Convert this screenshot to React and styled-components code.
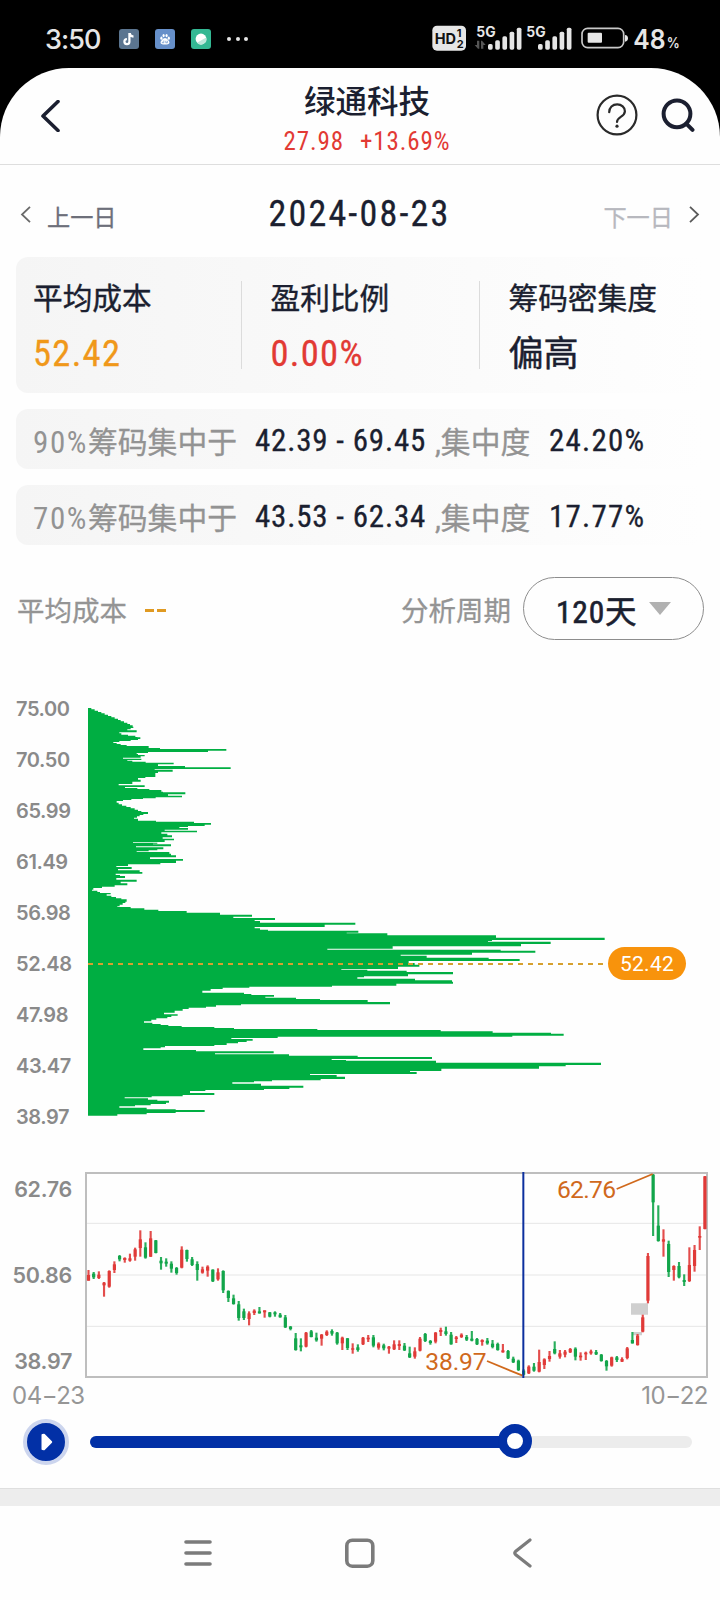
import React, { useState } from "react";
import styled, { createGlobalStyle } from "styled-components";

const GlobalStyle = createGlobalStyle`
  * {
    box-sizing: border-box;
  }
  body {
    margin: 0;
    background: #000;
    font-family: Roboto, "Noto Sans CJK SC", sans-serif;
    color: #1b1f30;
  }
  svg {
    display: block;
    flex: none;
  }
`;

const Screen = styled.div`
  width: 720px;
  height: 1600px;
  display: flex;
  flex-direction: column;
  overflow: hidden;
  background: #000;
`;

/* status bar */
const StatusBar = styled.div`
  height: 68px;
  flex: none;
  display: flex;
  align-items: center;
  justify-content: space-between;
  padding: 10px 10px 0 45px;
  color: #e6e6e6;
`;
const StatusLeft = styled.div`
  display: flex;
  align-items: center;
  gap: 16px;
`;
const Time = styled.span`
  width: 58px;
  margin-top: 2px;
  font-family: Inter, sans-serif;
  font-size: 27px;
  font-weight: 500;
  line-height: 30px;
  letter-spacing: -0.9px;
  white-space: nowrap;
`;
const AppBadge = styled.div`
  width: 20px;
  height: 20px;
  border-radius: 3px;
  background: ${(props) => props.color};
`;
const Dots = styled.div`
  display: flex;
  gap: 4.5px;
`;
const Dot = styled.i`
  width: 4px;
  height: 4px;
  border-radius: 50%;
  background: #e6e6e6;
`;

/* app sheet */
const Sheet = styled.div`
  flex: 1;
  display: flex;
  flex-direction: column;
  background: #fefefe;
  border-radius: 69px 69px 0 0;
`;
const Header = styled.header`
  height: 97px;
  flex: none;
  display: grid;
  grid-template-columns: 160px 1fr 146px;
  border-bottom: 1px solid #dedede;
`;
const HeaderLeft = styled.div`
  padding: 32px 0 0 40px;
`;
const HeaderRight = styled.div`
  display: flex;
  padding-top: 26px;
  margin-left: 22px;
  gap: 23px;
`;
const Titles = styled.div`
  display: flex;
  flex-direction: column;
  align-items: center;
  padding-top: 17px;
`;
const Title = styled.h1`
  margin: 0;
  font-size: 31.5px;
  font-weight: 500;
  line-height: 36px;
`;
const Quote = styled.div`
  display: flex;
  gap: 16px;
  margin-top: 7px;
  font-size: 25px;
  font-stretch: 75%;
  line-height: 28px;
  letter-spacing: 0.9px;
  color: #e23a34;
`;

const DateBar = styled.div`
  height: 92px;
  flex: none;
  display: grid;
  grid-template-columns: 160px 1fr 161px;
  align-items: center;
  padding: 6px 20px 0;
`;
const DayLink = styled.div`
  display: flex;
  align-items: center;
  justify-content: ${(props) => (props.$end ? "flex-end" : "flex-start")};
  gap: 16px;
  font-size: 23.2px;
  line-height: 28px;
  -webkit-text-stroke: 0.3px;
  color: ${(props) => (props.$end ? "#b7b8be" : "#6d6f7a")};
  span {
    margin-top: 7px;
  }
`;
const CurrentDate = styled.div`
  text-align: center;
  font-size: 36px;
  font-stretch: 75%;
  line-height: 40px;
  white-space: nowrap;
  letter-spacing: 2.2px;
  -webkit-text-stroke: 0.3px;
`;

const panel = "linear-gradient(90deg, #f5f5f5 0%, #fefefe 100%)";

const Summary = styled.div`
  height: 136px;
  flex: none;
  margin: 0 16px;
  padding: 24px 0 23px;
  display: grid;
  grid-template-columns: 225px 238px 1fr;
  border-radius: 12px;
  background: ${panel};
`;
const Stat = styled.div`
  height: 88px;
  padding-left: ${(props) => (props.$first ? 17 : 28.5)}px;
  border-left: ${(props) => (props.$first ? "none" : "1px solid #dcdcdc")};
  display: flex;
  flex-direction: column;
`;
const StatLabel = styled.span`
  font-size: 29.7px;
  line-height: 36px;
  white-space: nowrap;
  -webkit-text-stroke: 0.4px;
`;
const StatValue = styled.span`
  margin-top: ${(props) => (props.$text ? 20 : 19)}px;
  font-size: ${(props) => (props.$text ? 35 : 36.5)}px;
  font-weight: 400;
  font-stretch: 75%;
  line-height: 36px;
  letter-spacing: ${(props) => (props.$text ? 0 : 1.3)}px;
  -webkit-text-stroke: ${(props) => (props.$text ? 0.5 : 0.3)}px;
  color: ${(props) => props.color || "inherit"};
`;

const Range = styled.div`
  height: 60px;
  flex: none;
  margin: 16px 16px 0;
  padding: 2px 0 0 17px;
  display: flex;
  align-items: center;
  border-radius: 12px;
  background: ${panel};
  font-size: 29.8px;
  font-stretch: 75%;
  white-space: nowrap;
  -webkit-text-stroke: 0.3px;
  color: #939393;
`;
const RangeLabel = styled.span`
  width: ${(props) => props.width}px;
`;
// digits of the percentage are spaced wider than the characters after it
const Percent = styled.span`
  font-size: 31px;
  letter-spacing: 1.6px;
  -webkit-text-stroke: 0;
`;
const Strong = styled.b`
  width: ${(props) => props.width}px;
  padding-top: 1px;
  font-size: 31px;
  font-weight: 400;
  letter-spacing: ${(props) => props.$spacing}px;
  color: #1b1f30;
`;

const Controls = styled.div`
  height: 63px;
  flex: none;
  margin: 32px 16px 0 17px;
  display: flex;
  align-items: center;
  font-size: 27.5px;
  -webkit-text-stroke: 0.3px;
  color: #949494;
`;
const AvgDash = styled.span`
  display: flex;
  gap: 3px;
  margin: 4px auto 0 18px;
  i {
    width: 9px;
    height: 3px;
    background: #e09a22;
  }
`;
const PeriodSelect = styled.button`
  width: 181px;
  height: 63px;
  margin-left: 12px;
  padding: 0 0 0 32px;
  display: flex;
  align-items: center;
  gap: 12px;
  border: 1px solid #8d8d8d;
  border-radius: 32px;
  background: none;
  font-family: Roboto, "Noto Sans CJK SC", sans-serif;
  font-size: 31.5px;
  font-stretch: 75%;
  letter-spacing: 0.8px;
  -webkit-text-stroke: 0.6px;
  color: #1b1f30;
`;
const Caret = styled.i`
  margin-top: -1px;
  border: 11px solid transparent;
  border-top: 13px solid #b1b1b1;
  border-bottom: 0;
`;

/* chip distribution */
const ChipPanel = styled.section`
  height: 434px;
  flex: none;
  margin-top: 57px;
  display: flex;
`;
const PriceScale = styled.div`
  width: 88px;
  padding-left: 16px;
  display: flex;
  flex-direction: column;
`;
const PriceTick = styled.span`
  height: 51px;
  flex: none;
  font: 600 20px/24px Inter, sans-serif;
  letter-spacing: -0.4px;
  color: #8a8a8a;
`;
const ChipPlot = styled.div`
  position: relative;
  flex: 1;
  padding-top: 11.3px;
`;
const CostMark = styled.div`
  position: absolute;
  left: 0;
  top: 250px;
  display: flex;
  align-items: center;
`;
const CostLine = styled.div`
  width: 520px;
  height: 2px;
  background: repeating-linear-gradient(90deg, #d6a02e 0 5px, transparent 5px 10px);
`;
const CostPill = styled.div`
  width: 78px;
  height: 33px;
  border-radius: 17px;
  background: #f8930c;
  color: #fff;
  font-size: 21px;
  line-height: 34px;
  letter-spacing: 0.3px;
  text-align: center;
`;

/* candles */
const CandlePanel = styled.section`
  height: 207px;
  flex: none;
  margin-top: 41px;
  display: flex;
`;
const CandleScale = styled.div`
  width: 85px;
  padding: 4px 13px 5px 0;
  display: flex;
  flex-direction: column;
  justify-content: space-between;
  align-items: flex-end;
  font: 600 21.5px/26px Inter, sans-serif;
  letter-spacing: -0.3px;
  color: #8a8a8a;
`;
const Dates = styled.div`
  height: 32px;
  flex: none;
  padding: 2px 12px 0 12px;
  display: flex;
  justify-content: space-between;
  font: 400 24px/30px Inter, sans-serif;
  letter-spacing: -0.5px;
  color: #969696;
`;

const Player = styled.div`
  height: 77px;
  flex: none;
  padding: 8px 28px 0 23px;
  display: flex;
  align-items: flex-start;
  gap: 21px;
`;
const PlayButton = styled.button`
  width: 46px;
  height: 46px;
  padding: 0 0 0 1px;
  display: flex;
  align-items: center;
  justify-content: center;
  border: 4px solid #ccd5ee;
  border-radius: 50%;
  background: #0230a6;
`;
const Track = styled.div`
  position: relative;
  flex: 1;
  height: 12px;
  margin-top: 17px;
  border-radius: 6px;
  background: #ececec;
`;
const Fill = styled.div`
  height: 12px;
  border-radius: 6px;
  background: #0230a6;
`;
const Thumb = styled.div`
  position: absolute;
  top: -12.5px;
  width: 34px;
  height: 34px;
  margin-left: -17px;
  border: 9px solid #0230a6;
  border-radius: 50%;
  background: #fff;
`;

const Divider = styled.div`
  height: 18px;
  flex: none;
  border-top: 1px solid #dfdfdf;
  background: #ededed;
`;
const NavBar = styled.nav`
  flex: 1;
  display: grid;
  grid-template-columns: 162px 166px 1fr;
  align-items: center;
  padding-left: 182px;
`;

// outline of the chip distribution: [start, length], in thirds of a pixel
const chips = [
  [0, 10], [4, 20], [8, 30], [12, 40], [16, 50], [20, 60], [24, 70], [28, 80], [32, 90], [36, 98],
  [40, 108], [44, 118], [48, 126], [52, 134], [56, 136], [60, 128], [64, 118], [67, 146], [73, 94], [76, 100],
  [80, 120], [83, 142], [87, 148], [88, 157], [93, 150], [96, 128], [99, 94], [102, 76], [105, 86], [108, 98],
  [111, 116], [114, 182], [120, 216], [123, 415], [128, 360], [132, 180], [135, 146], [138, 150], [141, 170], [145, 158],
  [149, 105], [152, 160], [156, 118], [158, 133], [161, 173], [164, 257], [169, 210], [174, 291], [178, 428], [183, 200],
  [185, 254], [191, 210], [195, 202], [207, 172], [210, 150], [215, 158], [221, 133], [228, 92], [232, 170], [237, 111],
  [240, 148], [243, 184], [246, 220], [251, 225], [253, 292], [259, 240], [263, 282], [268, 203], [271, 165], [273, 130],
  [276, 105], [279, 86], [284, 92], [289, 102], [293, 115], [297, 128], [301, 140], [305, 150], [309, 160], [312, 180],
  [318, 166], [321, 155], [325, 147], [329, 138], [332, 150], [338, 204], [341, 318], [345, 369], [350, 350], [354, 300],
  [357, 274], [360, 300], [365, 230], [368, 327], [373, 220], [377, 238], [382, 252], [388, 224], [392, 258], [397, 230],
  [402, 135], [404, 208], [407, 195], [409, 249], [415, 144], [418, 226], [424, 208], [427, 182], [430, 146], [432, 244],
  [437, 249], [442, 264], [448, 186], [453, 285], [458, 264], [465, 217], [469, 120], [474, 85], [477, 131], [483, 90],
  [487, 155], [492, 163], [497, 83], [501, 96], [504, 111], [510, 85], [515, 146], [521, 98], [526, 118], [532, 80],
  [536, 42], [540, 16], [545, 12], [548, 28], [552, 36], [555, 68], [559, 56], [563, 70], [567, 84], [571, 100],
  [574, 116], [581, 112], [585, 104], [590, 95], [595, 88], [597, 128], [601, 169], [605, 211], [609, 296], [614, 396],
  [620, 492], [626, 436], [630, 561], [636, 500], [639, 516], [644, 802], [650, 710], [657, 500], [661, 516], [665, 540],
  [668, 811], [674, 776], [676, 898], [682, 1224], [689, 1550], [696, 1212], [699, 1200], [701, 1388], [708, 1299], [715, 914],
  [722, 718], [725, 1238], [728, 1342], [734, 1152], [740, 938], [743, 1016], [749, 1202], [753, 1295], [759, 962], [765, 980],
  [770, 994], [776, 930], [783, 760], [785, 838], [788, 956], [792, 1095], [799, 960], [805, 828], [808, 808], [812, 981],
  [817, 1092], [821, 1095], [827, 925], [833, 732], [836, 484], [839, 404], [843, 368], [848, 343], [854, 468], [858, 490],
  [861, 558], [866, 532], [869, 624], [873, 696], [876, 839], [882, 906], [889, 459], [892, 384], [896, 354], [899, 302],
  [903, 284], [908, 260], [914, 228], [919, 269], [923, 250], [927, 238], [931, 205], [935, 190], [940, 168], [944, 193],
  [948, 218], [951, 241], [954, 281], [957, 379], [960, 438], [963, 688], [966, 1058], [970, 1214], [974, 1389], [977, 1427],
  [983, 1273], [986, 569], [990, 430], [993, 494], [998, 476], [1002, 450], [1006, 416], [1011, 379], [1014, 231], [1018, 218],
  [1021, 166], [1026, 324], [1030, 557], [1036, 381], [1039, 603], [1043, 809], [1047, 1032], [1053, 731], [1056, 774], [1058, 1044],
  [1064, 1539], [1071, 1433], [1075, 1353], [1082, 1060], [1089, 966], [1092, 986], [1098, 666], [1101, 746], [1106, 771], [1113, 698],
  [1117, 552], [1120, 498], [1123, 433], [1127, 519], [1133, 646], [1139, 604], [1143, 528], [1146, 352], [1149, 306], [1155, 379],
  [1161, 284], [1165, 191], [1168, 110], [1171, 180], [1175, 208], [1178, 243], [1184, 234], [1188, 188], [1192, 141], [1195, 94],
  [1199, 176], [1204, 263], [1206, 350], [1212, 263], [1215, 176], [1219, 88], [1223, 0],
];

// high, body top, body bottom, low, in thirds of a pixel; r = up day, g = down day
const candles = `
r330,345,362,362 g336,341,352,357 r334,344,354,357 r366,368,376,410 r331,333,380,383 r304,313,330,339
g285,288,298,304 r292,294,300,308 r281,295,302,305 r263,268,290,302 r211,238,264,290 g247,262,293,296
r213,235,290,291 g240,241,279,280 g291,302,310,329 g295,305,311,320 g304,311,326,338 g321,324,339,344
r259,269,323,325 g269,270,297,305 g291,298,315,318 g304,312,330,362 r320,328,338,341 r316,320,332,350
g328,329,364,366 r325,337,358,362 g331,333,391,399 g391,393,414,426 g404,415,432,434 g423,433,474,482
g446,454,474,480 r454,460,477,496 r448,452,459,465 g441,454,460,461 r451,451,457,473 g456,457,470,472
g454,457,463,470 g459,464,472,473 g465,472,502,504 g498,500,507,511 g519,535,570,572 g535,556,562,574
r516,518,560,562 g510,514,531,532 g518,533,541,545 r522,524,536,557 r511,515,525,528 g508,513,521,527
g516,518,550,554 r530,533,550,570 g534,535,564,570 r550,565,569,581 g553,562,570,575 r531,533,553,555
r525,533,538,546 g525,532,557,562 r547,551,563,569 g551,556,565,571 r558,560,566,581 r541,553,568,570
r541,552,558,570 g549,557,571,573 g560,580,592,594 r562,574,590,596 r531,536,572,574 g519,522,543,546
g540,543,549,554 r516,518,545,550 r503,510,516,528 g500,514,522,527 g516,524,553,554 r528,532,537,549
r520,524,531,534 g525,531,539,543 g513,536,542,544 g534,537,553,555 r538,540,546,557 g534,542,550,554
g540,551,561,565 g548,552,570,572 r552,571,577,578 g570,573,595,597 g590,596,607,609 g599,602,630,633
g628,632,644,646 r616,620,640,642 g609,620,632,635 r569,606,635,637 r595,598,615,627 r573,588,597,605
g544,567,580,583 r570,580,590,596 r570,575,584,592 r564,567,577,579 g562,566,590,601 r577,587,592,602
r575,578,583,600 r569,574,580,584 g570,576,583,585 g582,584,603,605 g600,603,619,632 r590,592,617,620
g588,592,600,606 r592,597,605,606 r561,565,594,598 g516,540,550,551 r522,527,555,557 r464,472,515,517
r279,288,422,430 g42,44,127,228 g136,197,243,245 r208,238,245,290 g242,252,336,351 r316,318,330,362
g306,318,352,355 g343,360,366,378 r262,315,363,366 r255,270,318,335 r199,228,233,270 r48,49,207,208`
  .trim()
  .split(/\s+/)
  .map((c) => ({ up: c[0] === "r", v: c.slice(1).split(",").map(Number) }));

const prices = ["75.00", "70.50", "65.99", "61.49", "56.98", "52.48", "47.98", "43.47", "38.97"];

const ranges = [
  { percent: "90%", range: "42.39 - 69.45", rate: "24.20%" },
  { percent: "70%", range: "43.53 - 62.34", rate: "17.77%" },
];

function ChipShape() {
  const d = chips.map(([y, len]) => `V${y}H${len}`).join("");
  return (
    <svg width="520" height="408" viewBox="0 0 1560 1224">
      <path d={`M0 0${d}V1223H0Z`} fill="#00ae42" />
    </svg>
  );
}

function SignalBars({ x }) {
  return [103, 92, 80, 66, 54].map((top, i) => (
    <rect key={top} x={x + i * 21.6} y={top} width="14" height={120 - top} rx="5" />
  ));
}

function SystemIcons() {
  return (
    <svg width="285" height="58" viewBox="0 1 855 174" fill="#e6e6e6" fontFamily="Inter, sans-serif">
      <rect x="22" y="48" width="101" height="75" rx="14" />
      <g fill="#111" fontWeight="700">
        <text x="29" y="102" fontSize="45" textLength="64" lengthAdjust="spacingAndGlyphs">HD</text>
        <text x="95" y="81" fontSize="33">1</text>
        <text x="95" y="115" fontSize="33">2</text>
      </g>
      <g fontSize="42" fontWeight="700">
        <text x="154" y="81" textLength="58" lengthAdjust="spacingAndGlyphs">5G</text>
        <text x="304" y="81" textLength="58" lengthAdjust="spacingAndGlyphs">5G</text>
      </g>
      <path d="M156 93h7v24h-4l-10-11h7zM168 117h7v-11h7l-11-13h-3z" fill="#555" />
      <SignalBars x={189} />
      <SignalBars x={339} />
      <rect x="471" y="56" width="125" height="58" rx="17" fill="none" stroke="#c9c9c9" strokeWidth="5" />
      <rect x="488" y="69" width="43" height="30" rx="3" />
      <path d="M600 76q9 1 9 10t-9 10z" />
      <text x="625" y="117" fontSize="80" fontWeight="600" textLength="97" lengthAdjust="spacingAndGlyphs">48</text>
      <text x="725" y="115" fontSize="43" fontWeight="600" textLength="39" lengthAdjust="spacingAndGlyphs">%</text>
    </svg>
  );
}

function CandleChart() {
  return (
    <svg width="624" height="207" viewBox="255 36 1872 621">
      <path d="M260 190H2120M260 345H2120M260 499H2120" stroke="#e6e6e6" strokeWidth="3" />
      <path d="M1893 430h51v34h-51zM1898 516h28v10h-28z" fill="#cfcfcf" />
      <rect x="258" y="39" width="1863" height="612" fill="none" stroke="#bebebe" strokeWidth="6" />
      {candles.map(({ up, v }, i) => {
        const x = 265.5 + i * 15.54;
        return (
          <g key={i} fill={up ? "#e03a38" : "#12a54a"}>
            <rect x={x - 3.2} y={v[0]} width="6.4" height={v[3] - v[0]} opacity="0.9" />
            <rect x={x - 4.8} y={v[1]} width="9.6" height={v[2] - v[1]} />
          </g>
        );
      })}
      <path d="M1461 603L1568 647M1850 87L1958 42" stroke="#d0691c" strokeWidth="5.5" />
      <g fill="#d0691c" fontFamily="Roboto, sans-serif" fontSize="74">
        <text x="1276" y="631" textLength="184">38.97</text>
        <text x="1671" y="114" textLength="177">62.76</text>
      </g>
      <path d="M1570 36V654" stroke="#0c2f9e" strokeWidth="6" />
    </svg>
  );
}

function App() {
  const [progress] = useState(70.6);

  return (
    <Screen>
      <GlobalStyle />
      <StatusBar>
        <StatusLeft>
          <Time>3:50</Time>
          <AppBadge color="#5b7590">
            <svg width="20" height="20" viewBox="0 0 20 20" fill="none" stroke="#fff" strokeWidth="2.2">
              <path d="M10.4 4v8.8a2.5 2.5 0 1 1-2.5-2.7M10.6 4.2c.3 2 1.8 3.2 3.9 3.4" />
            </svg>
          </AppBadge>
          <AppBadge color="#668fc9">
            <svg width="20" height="20" viewBox="0 0 20 20" fill="#fff">
              <ellipse cx="6.4" cy="9.2" rx="1.1" ry="1.6" />
              <ellipse cx="8.6" cy="6.6" rx="1.1" ry="1.6" />
              <ellipse cx="11.6" cy="6.6" rx="1.1" ry="1.6" />
              <ellipse cx="13.8" cy="9.2" rx="1.1" ry="1.6" />
              <path d="M10 9c1.8 0 4.4 3 4.4 4.4s-1.2 2-4.4 2-4.4-.6-4.4-2S8.2 9 10 9z" />
              <path d="M8.8 11.5v2.3H7.3v-1M10.8 11.8v2h1.6v-2" fill="none" stroke="#668fc9" strokeWidth="0.7" />
            </svg>
          </AppBadge>
          <AppBadge color="#33b893">
            <svg width="20" height="20" viewBox="0 0 20 20">
              <circle cx="10" cy="10" r="5.4" fill="#fff" />
              <path d="M15.2 8.5a5.4 5.4 0 0 1-9.2 5.2z" fill="#bfe8dc" />
            </svg>
          </AppBadge>
          <Dots>
            <Dot />
            <Dot />
            <Dot />
          </Dots>
        </StatusLeft>
        <SystemIcons />
      </StatusBar>

      <Sheet>
        <Header>
          <HeaderLeft>
            <svg width="20" height="32" viewBox="0 0 20 32" fill="none" stroke="#1b1f30" strokeWidth="3.6">
              <path d="M18 1.5L3 16l15 14.5" strokeLinecap="round" strokeLinejoin="round" />
            </svg>
          </HeaderLeft>
          <Titles>
            <Title>绿通科技</Title>
            <Quote>
              <span>27.98</span>
              <span>+13.69%</span>
            </Quote>
          </Titles>
          <HeaderRight>
            <svg width="42" height="42" viewBox="0 0 42 42" fill="none" stroke="#2a2a2a" strokeWidth="2.2">
              <circle cx="21" cy="21" r="19.4" />
              <path d="M13.2 18.2c0-4.6 3.4-7.8 8-7.8 4.4 0 7.7 2.8 7.7 6.8 0 6-7.9 5.4-7.9 10.8" strokeLinecap="round" />
              <circle cx="21" cy="32.2" r="1.6" fill="#2a2a2a" stroke="none" />
            </svg>
            <svg width="34" height="42" viewBox="0 0 34 42" fill="none" stroke="#1b1f30" strokeWidth="4">
              <circle cx="16" cy="19.8" r="13.4" />
              <path d="M25.5 29.8l6 6" strokeLinecap="round" />
            </svg>
          </HeaderRight>
        </Header>

        <DateBar>
          <DayLink>
            <svg width="11" height="17" viewBox="0 0 11 17" fill="none" stroke="#6a6a6a" strokeWidth="1.8">
              <path d="M10 .8L2 8.5l8 7.7" />
            </svg>
            <span>上一日</span>
          </DayLink>
          <CurrentDate>2024-08-23</CurrentDate>
          <DayLink $end>
            <span>下一日</span>
            <svg width="11" height="17" viewBox="0 0 11 17" fill="none" stroke="#5a5a5a" strokeWidth="1.8">
              <path d="M1 .8l8 7.7-8 7.7" />
            </svg>
          </DayLink>
        </DateBar>

        <Summary>
          <Stat $first>
            <StatLabel>平均成本</StatLabel>
            <StatValue color="#f0981a">52.42</StatValue>
          </Stat>
          <Stat>
            <StatLabel>盈利比例</StatLabel>
            <StatValue color="#e23a34">0.00%</StatValue>
          </Stat>
          <Stat>
            <StatLabel>筹码密集度</StatLabel>
            <StatValue $text>偏高</StatValue>
          </Stat>
        </Summary>
        {ranges.map((r) => (
          <Range key={r.percent}>
            <RangeLabel width={222}>
              <Percent>{r.percent}</Percent>筹码集中于
            </RangeLabel>
            <Strong width={180} $spacing={0.8}>{r.range}</Strong>
            <RangeLabel width={114}>,集中度</RangeLabel>
            <Strong width={100} $spacing={1.2}>{r.rate}</Strong>
          </Range>
        ))}

        <Controls>
          <span>平均成本</span>
          <AvgDash>
            <i />
            <i />
          </AvgDash>
          <span>分析周期</span>
          <PeriodSelect>
            120天
            <Caret />
          </PeriodSelect>
        </Controls>

        <ChipPanel>
          <PriceScale>
            {prices.map((p) => (
              <PriceTick key={p}>{p}</PriceTick>
            ))}
          </PriceScale>
          <ChipPlot>
            <ChipShape />
            <CostMark>
              <CostLine />
              <CostPill>52.42</CostPill>
            </CostMark>
          </ChipPlot>
        </ChipPanel>

        <CandlePanel>
          <CandleScale>
            <span>62.76</span>
            <span>50.86</span>
            <span>38.97</span>
          </CandleScale>
          <CandleChart />
        </CandlePanel>
        <Dates>
          <span>04−23</span>
          <span>10−22</span>
        </Dates>

        <Player>
          <PlayButton>
            <svg width="12" height="18" viewBox="0 0 12 18" fill="#fff" stroke="#fff" strokeLinejoin="round" strokeWidth="2">
              <path d="M1.5 2l1.5-.3L10.2 9 3 16.3 1.5 16z" />
            </svg>
          </PlayButton>
          <Track>
            <Fill style={{ width: `${progress}%` }} />
            <Thumb style={{ left: `${progress}%` }} />
          </Track>
        </Player>

        <Divider />
        <NavBar>
          <svg width="32" height="30" viewBox="0 0 32 30" stroke="#7b7b7b" strokeWidth="3.6" strokeLinecap="round">
            <path d="M4 4h24M4 15h24M4 26h24" />
          </svg>
          <svg width="32" height="32" viewBox="0 0 32 32" fill="none" stroke="#7b7b7b" strokeWidth="3.6">
            <rect x="2.8" y="3.2" width="26" height="26" rx="5.5" />
          </svg>
          <svg width="22" height="32" viewBox="0 0 22 32" fill="none" stroke="#7b7b7b" strokeWidth="3.2">
            <path d="M20 3L5.5 14.5q-1.4 1.5 0 3L20 29" strokeLinecap="round" />
          </svg>
        </NavBar>
      </Sheet>
    </Screen>
  );
}

export default App;
